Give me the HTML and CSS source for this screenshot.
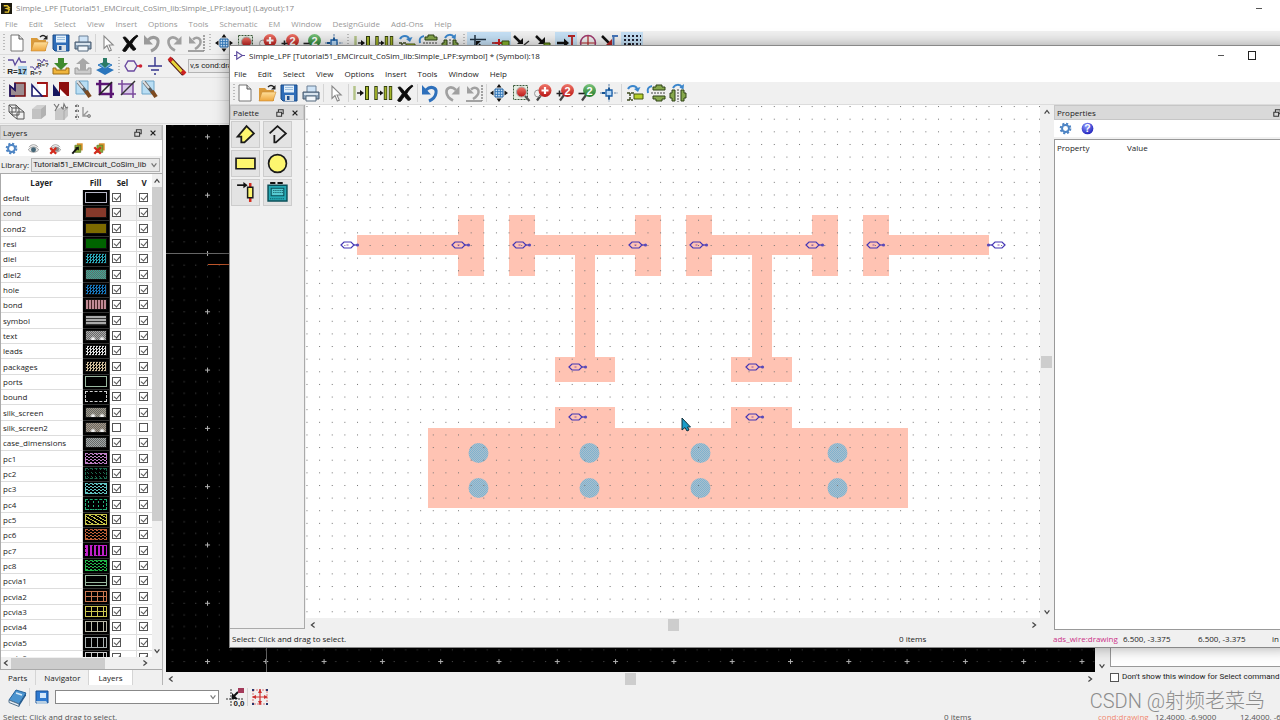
FILE: index.html
```html
<!DOCTYPE html>
<html lang="en">
<head>
<meta charset="utf-8">
<title>Simple_LPF (Symbol):18</title>
<link rel="stylesheet" href="styles.css">
</head>
<body>
<svg class="sprite" aria-hidden="true">
  <defs>
    <linearGradient id="g-red" x1="0" y1="0" x2="0" y2="1"><stop offset="0" stop-color="#f0776a"/><stop offset="1" stop-color="#b81414"/></linearGradient>
    <linearGradient id="g-green" x1="0" y1="0" x2="0" y2="1"><stop offset="0" stop-color="#7cc47c"/><stop offset="1" stop-color="#1d7a2a"/></linearGradient>
    <linearGradient id="g-folder" x1="0" y1="0" x2="0" y2="1"><stop offset="0" stop-color="#ffdf9a"/><stop offset="1" stop-color="#eda63c"/></linearGradient>
    <radialGradient id="g-help" cx=".4" cy=".3" r=".8"><stop offset="0" stop-color="#8f9cff"/><stop offset="1" stop-color="#1414b4"/></radialGradient>
    <pattern id="p-weave" width="2" height="2" patternUnits="userSpaceOnUse"><rect width="2" height="2" fill="#a9bfce"/><path d="M0 0h1v1H0zM1 1h1v1H1z" fill="#7fb2ce"/></pattern>
    <pattern id="p-grid" x="357" y="245" width="12.63" height="12.63" patternUnits="userSpaceOnUse"><rect width="1" height="1" fill="#707070"/></pattern>
    <pattern id="p-dark" x="207" y="253" width="58.3" height="58.3" patternUnits="userSpaceOnUse">
      <path fill="#555" d="M0 11.7h1v1H0zM0 23.3h1v1H0zM0 35h1v1H0zM0 46.6h1v1H0zM11.7 0h1v1h-1zM11.7 11.7h1v1h-1zM11.7 23.3h1v1h-1zM11.7 35h1v1h-1zM11.7 46.6h1v1h-1zM23.3 0h1v1h-1zM23.3 11.7h1v1h-1zM23.3 23.3h1v1h-1zM23.3 35h1v1h-1zM23.3 46.6h1v1h-1zM35 0h1v1h-1zM35 11.7h1v1h-1zM35 23.3h1v1h-1zM35 35h1v1h-1zM35 46.6h1v1h-1zM46.6 0h1v1h-1zM46.6 11.7h1v1h-1zM46.6 23.3h1v1h-1zM46.6 35h1v1h-1zM46.6 46.6h1v1h-1z"/>
    </pattern>
    <pattern id="p-cross" x="205" y="251" width="58.3" height="58.3" patternUnits="userSpaceOnUse"><path d="M0 2.5h5M2.5 0v5" stroke="#b5b5b5"/></pattern>
  </defs>

  <symbol id="i-new" viewBox="0 0 20 20"><path d="M4 2h8l4 4v12H4z" fill="#fff" stroke="#777"/><path d="M12 2v4h4" fill="#ddd" stroke="#555"/></symbol>
  <symbol id="i-open" viewBox="0 0 20 20"><path d="M2 5h6l2 2h7v11H2z" fill="#d99a3a"/><path d="M2 18L5 9h14l-3 9z" fill="url(#g-folder)" stroke="#c98b35" stroke-width=".6"/><path d="M11 4c2-2 4-2 6 0" fill="none" stroke="#222" stroke-width="1.4"/><path d="M18.500 2v4.500H14z" fill="#222"/></symbol>
  <symbol id="i-save" viewBox="0 0 20 20"><path d="M2 2h16v16H4l-2-2z" fill="#2f6db8" stroke="#184a86"/><path d="M5 2.500h10v7H5z" fill="#e3f0fb"/><path d="M6 4.500h8M6 6.500h8" stroke="#9fc1df"/><path d="M6 12h9v6H6z" fill="#d8dfe6"/><path d="M8 13h2.500v4H8z" fill="#1f4f8d"/></symbol>
  <symbol id="i-print" viewBox="0 0 20 20"><path d="M6 3h9v7H6z" fill="#cfe4f7" stroke="#6a7f95"/><path d="M2 9h16v7H2z" fill="#8ba3ba" stroke="#46596c"/><path d="M3 10h14v2H3z" fill="#d9e4ee"/><path d="M5 13h10v5H5z" fill="#f3f7fb" stroke="#54687c"/></symbol>
  <symbol id="i-pointer" viewBox="0 0 20 20"><path d="M6 3v12.500l3-3 2.300 5.500 2-.9-2.300-5.100h4.200z" fill="#fff" stroke="#888" stroke-width="1.100"/></symbol>
  <symbol id="i-delete" viewBox="0 0 20 20"><path d="M3 4.500c1.500-1 2.700-.7 3.700.8l3 3.500c2-3 4-4.800 7.300-6.800l1 1.200c-3 2.500-4.800 4.800-6.200 7.600l4.200 5.200c-1.500 1.800-3 1.800-4.200.3l-2.500-3-3.300 4.700c-1.200 1-3 .6-3.400-.8l4.700-6.400z" fill="#0b0b0b" stroke="#0b0b0b" stroke-width=".8"/></symbol>
  <symbol id="i-undo" viewBox="0 0 20 20"><path d="M6 7c5-5 11-2 10 3-.5 3.500-3.500 6.500-7 8" fill="none" stroke="#2e70bb" stroke-width="3"/><path d="M2 2v9.500h9z" fill="#2e70bb"/></symbol>
  <symbol id="i-undo-off" viewBox="0 0 20 20"><path d="M6 7c5-5 11-2 10 3-.5 3.500-3.500 6.500-7 8" fill="none" stroke="#9a9a9a" stroke-width="3"/><path d="M2 2v9.500h9z" fill="#9a9a9a"/></symbol>
  <symbol id="i-redo" viewBox="0 0 20 20"><path d="M14 7c-5-5-10-2-9.500 2.500.4 3.500 3.500 6.500 6.500 8" fill="none" stroke="#a0a0a0" stroke-width="2.600"/><path d="M17.500 3v8.500H9.500z" fill="#a0a0a0"/></symbol>
  <symbol id="i-undo-list" viewBox="0 0 20 20"><path d="M7 6.500c4-3.500 8-1 7.500 3-.4 3-3 5-5.500 6.500" fill="none" stroke="#a0a0a0" stroke-width="2.400"/><path d="M3 3v7.500h7z" fill="#a0a0a0"/><path d="M2 18h16" stroke="#888" stroke-width="1.500"/><path d="M18 2v16" stroke="#888" stroke-width="1.500" stroke-dasharray="2 1"/></symbol>
  <symbol id="i-view-all" viewBox="0 0 20 20"><path d="M6 6h8v8H6z" fill="#cfe6fa" stroke="#14589c"/><path d="M8.700 6v8M11.300 6v8M6 8.700h8M6 11.300h8" stroke="#2f76b8"/><path d="M10 1l2.500 3.500h-5zM10 19l2.500-3.500h-5zM1 10l3.500-2.500v5zM19 10l-3.500-2.500v5z" fill="#111"/></symbol>
  <symbol id="i-zoom-area" viewBox="0 0 20 20"><path d="M2.500 2.500h14v14h-14z" fill="#e5eee2" stroke="#3c5a3c" stroke-dasharray="2 1"/><circle cx="10.500" cy="9" r="5" fill="url(#g-red)" stroke="#aaa"/><path d="M14 13l4.500 5" stroke="#555" stroke-width="2.200"/></symbol>
  <symbol id="i-zoom-in" viewBox="0 0 20 20"><path d="M8 12l-4 5.500" stroke="#444" stroke-width="2.200"/><circle cx="5" cy="10.500" r="3.500" fill="none" stroke="#999"/><circle cx="12" cy="7.500" r="6.500" fill="url(#g-red)"/><path d="M12 4v7M8.500 7.500h7" stroke="#fff" stroke-width="2.200"/></symbol>
  <symbol id="i-zoom-in2" viewBox="0 0 20 20"><path d="M9 12l-4 5.500" stroke="#444" stroke-width="2.200"/><circle cx="12.500" cy="7.500" r="6.500" fill="url(#g-red)"/><path d="M4.500 7.500v6M1.500 10.500h6" stroke="#222" stroke-width="1.600"/><text x="12.500" y="11.500" class="icon-digit">2</text></symbol>
  <symbol id="i-zoom-out2" viewBox="0 0 20 20"><path d="M9 12l-4 5.500" stroke="#444" stroke-width="2.200"/><circle cx="12.500" cy="7.500" r="6.500" fill="url(#g-green)"/><path d="M1.500 10.500h6" stroke="#222" stroke-width="1.600"/><text x="12.500" y="11.500" class="icon-digit">2</text></symbol>
  <symbol id="i-center" viewBox="0 0 20 20"><path d="M10 1v18M1 10h18" stroke="#5b7fa6" stroke-dasharray="2.500 1"/><path d="M7 7h6v6H7z" fill="#b9d9f5" stroke="#1a5fa8" stroke-width="1.300"/><path d="M10 4.500v3M10 12.500v4M3 10h3" stroke="#155393" stroke-width="1.800"/></symbol>
  <symbol id="i-copy-to" viewBox="0 0 20 20"><path d="M3.500 3v14" stroke="#b5c48a" stroke-width="2.500"/><path d="M16 3v14" stroke="#33400f" stroke-width="4"/><path d="M16 4v12" stroke="#a5b52a" stroke-width="2"/><path d="M6 10h4" stroke="#111" stroke-width="1.300"/><path d="M13 10L9 7v6z" fill="#111"/></symbol>
  <symbol id="i-copy-many" viewBox="0 0 20 20"><path d="M3 3v14M12.500 3v14M17.500 3v14" stroke="#33400f" stroke-width="3.400"/><path d="M3 4v12M12.500 4v12M17.500 4v12" stroke="#a5b52a" stroke-width="1.800"/><path d="M5 10h3" stroke="#111" stroke-width="1.300"/><path d="M10.500 10L7 7.500v5z" fill="#111"/></symbol>
  <symbol id="i-rotate" viewBox="0 0 20 20"><path d="M4 6c2-4 8-4 9 0" fill="none" stroke="#3b86cc" stroke-width="2"/><path d="M16.500 4l-2.500 5-4-3z" fill="#3b86cc"/><path d="M3 10h7M3 17h6M6 10v7" stroke="#3e4a20" stroke-width="1.500" stroke-dasharray="3 1"/><path d="M10 11h9v5h-9z" fill="#b6cf2c" stroke="#42540e"/></symbol>
  <symbol id="i-flip-v" viewBox="0 0 20 20"><path d="M2 10c-1-4 0-6 4-7" fill="none" stroke="#3b86cc" stroke-width="2"/><path d="M5 10h14" stroke="#444" stroke-dasharray="2 1"/><path d="M7 4h3V2h6v2h3v3H7zM7 13h12v3h-3v2h-6v-2H7z" fill="#86a84c" stroke="#2f4316"/></symbol>
  <symbol id="i-flip-h" viewBox="0 0 20 20"><path d="M5 5c2-4 7-4 9-1" fill="none" stroke="#3b86cc" stroke-width="2"/><path d="M16 1l-.5 5.500-4-2z" fill="#3b86cc"/><path d="M10 6v13" stroke="#444" stroke-dasharray="2 1"/><path d="M7 7v11H4v-3H2v-5h2V7zM13 7v11h3v-3h2v-5h-2V7z" fill="#86a84c" stroke="#2f4316"/></symbol>
  <symbol id="i-snap-corner" viewBox="0 0 20 20"><path d="M2 6.500h16M7 2v16" stroke="#234" stroke-width="1.500"/><path d="M15 15l-4-4" stroke="#111" stroke-width="1.500"/><path d="M8 8h5l-5 5z" fill="#111"/></symbol>
  <symbol id="i-snap-pin" viewBox="0 0 20 20"><path d="M2 10h6" stroke="#911" stroke-width="1.500"/><path d="M9 6v8M5 10h8" stroke="#c22" stroke-width="2"/><path d="M12 8h7v5h-7z" fill="#86b32f" stroke="#375010"/></symbol>
  <symbol id="i-snap-vertex" viewBox="0 0 20 20"><path d="M2 3l7 7" stroke="#111" stroke-width="2.500"/><path d="M11 5v6H5z" fill="#111"/><path d="M12 12l6 4M12 12l5-4M12 12v6" stroke="#333" stroke-width="1.500"/></symbol>
  <symbol id="i-snap-edge" viewBox="0 0 20 20"><path d="M2 3l7 7" stroke="#111" stroke-width="2.500"/><path d="M11 4v7H4z" fill="#111"/><path d="M10 10h6v6h-6z" fill="#7aa52a" stroke="#36500d"/></symbol>
  <symbol id="i-snap-end" viewBox="0 0 20 20"><path d="M1 10h9" stroke="#111" stroke-width="2.500"/><path d="M13 10L8 5.500v9z" fill="#111"/><path d="M12 3h7M16 3v14" stroke="#b32424" stroke-width="1.800"/></symbol>
  <symbol id="i-snap-center" viewBox="0 0 20 20"><circle cx="10" cy="10" r="7.500" fill="none" stroke="#a03a6e" stroke-width="1.500"/><path d="M10 3v14M3 10h14" stroke="#b32424" stroke-width="1.200"/></symbol>
  <symbol id="i-snap-mid" viewBox="0 0 20 20"><path d="M2 3l7 7" stroke="#111" stroke-width="2.500"/><path d="M12 6v6H6z" fill="#b32424"/><path d="M12 3h6M13.500 3v15" stroke="#4574b8" stroke-width="2"/></symbol>
  <symbol id="i-snap-grid" viewBox="0 0 20 20"><path d="M2 3h17M2 7h17M2 11h17M2 15h17" stroke="#223" stroke-width="2" stroke-dasharray="2 2"/><path d="M5 12l4-2v5z" fill="#111"/></symbol>

  <symbol id="i-var" viewBox="0 0 20 20"><path d="M1 4h5l2 5 4-7 2 4h5" fill="none" stroke="#5b4a9c" stroke-width="1.300"/><path d="M11 10h9v9h-9z" fill="#a8cfe8"/><text x="10" y="18" class="icon-label">R=17</text></symbol>
  <symbol id="i-vars" viewBox="0 0 20 20"><path d="M8 4h3l2 3 2-4 1 2h3M1 11h3l2 3 2-4 1 2h2" fill="none" stroke="#5b4a9c"/><text x="14" y="11" class="icon-label small">R=?</text><text x="7" y="19" class="icon-label small">R=?</text></symbol>
  <symbol id="i-push" viewBox="0 0 20 20"><path d="M2 12v6h16v-6h-3v2H5v-2z" fill="#f0b53c" stroke="#9a6a14"/><path d="M7 2h6v5h4l-7 7-7-7h4z" fill="#3f8a2e"/></symbol>
  <symbol id="i-pop" viewBox="0 0 20 20"><path d="M2 12v6h16v-6h-3v2H5v-2z" fill="#ccc" stroke="#999"/><path d="M7 14h6V8h4l-7-6-7 6h4z" fill="#a8a8a8"/></symbol>
  <symbol id="i-stack" viewBox="0 0 20 20"><path d="M1 14l9-4 9 4-9 5z" fill="#2a76bd"/><path d="M3 9l7-3 7 3-7 4z" fill="#7bb7e6" stroke="#2a76bd"/><path d="M8 2h4v5h3l-5 5-5-5h3z" fill="#2b7b66"/></symbol>
  <symbol id="i-pin" viewBox="0 0 20 20"><path d="M2 10l3-5h6l3 5-3 5H5z" fill="none" stroke="#6a4aa0" stroke-width="1.400"/><path d="M14 10h4" stroke="#c23" stroke-width="1.500"/><circle cx="17.500" cy="10" r="1.800" fill="#c23"/></symbol>
  <symbol id="i-ground" viewBox="0 0 20 20"><path d="M10 1v9M3 10h14M6 14h8M9 18h2" stroke="#35358c" stroke-width="1.400"/></symbol>
  <symbol id="i-trace" viewBox="0 0 20 20"><path d="M3 3l14 15" stroke="#4a1212" stroke-width="5"/><path d="M4 4l12 13" stroke="#e8d53a" stroke-width="3"/><path d="M2 2l3 3M15 15l3 3" stroke="#c22" stroke-width="4"/></symbol>

  <symbol id="i-union" viewBox="0 0 20 20"><path d="M3 7l5 4V4h10v13H3z" fill="#9b8c90" stroke="#7c1111" stroke-width="1.600"/><path d="M8 4v7L3 7v10h5" fill="none" stroke="#1b1b6e" stroke-width="1.600"/></symbol>
  <symbol id="i-intersect" viewBox="0 0 20 20"><path d="M8 4h10v13h-6" fill="#fff" stroke="#a01414" stroke-width="1.800"/><path d="M3 6v11h10z" fill="#fff" stroke="#1b1b6e" stroke-width="1.600"/></symbol>
  <symbol id="i-subtract" viewBox="0 0 20 20"><path d="M8 3h10v14H8z" fill="#8d0f0f"/><path d="M2 5v12h9z" fill="#15155e"/><path d="M9 10v7h7z" fill="#fff"/></symbol>
  <symbol id="i-tool-knife" viewBox="0 0 20 20"><path d="M3 2h12v13H3z" fill="#b9def4" stroke="#6ea6c9"/><path d="M5 3l9 11" stroke="#555" stroke-width="3.500"/><path d="M4 2l6 7" stroke="#ddd" stroke-width="2"/><path d="M13 12l4 6" stroke="#7d4a1f" stroke-width="4"/></symbol>
  <symbol id="i-crop" viewBox="0 0 20 20"><path d="M1 5h15v14M5 1v14h14" fill="none" stroke="#5a1673" stroke-width="2.600"/><path d="M4 16L17 3" stroke="#222" stroke-width="1.600"/></symbol>
  <symbol id="i-crop-light" viewBox="0 0 20 20"><path d="M5 5h11v10H5z" fill="#d9c8ea"/><path d="M1 5h15v14M5 1v14h14" fill="none" stroke="#7a4a9c" stroke-width="1.500"/><path d="M4 16L18 2" stroke="#333" stroke-width="1.500"/></symbol>
  <symbol id="i-cubes" viewBox="0 0 20 20"><path d="M2 3h7v7H2zM5 6h7v7H5zM10 10h7v7h-7zM2 3l3 3M9 3l3 3M12 6l5 4M5 13l5 4M2 10l3 3" fill="none" stroke="#555"/></symbol>
  <symbol id="i-solid" viewBox="0 0 20 20"><path d="M3 7l5-4h9v10l-5 4H3z" fill="#d0d0d0"/><path d="M3 7h9v10H3z" fill="#c2c2c2"/><path d="M12 7l5-4v10l-5 4z" fill="#b2b2b2"/></symbol>
  <symbol id="i-solid-axis" viewBox="0 0 20 20"><path d="M4 9l4-3h9v8l-4 4H4z" fill="#c8c8c8"/><path d="M13 9v9M13 9l4-3" fill="none" stroke="#aaa"/><path d="M3 2l3 4M8 2L4 9M10 5l2 2 1-5 2 4 2-1" fill="none" stroke="#777" stroke-width="1.200"/></symbol>
  <symbol id="i-tree" viewBox="0 0 20 20"><path d="M4 2v16" stroke="#aaa" stroke-width="1.400" stroke-dasharray="3 2"/><path d="M10 5v9h7M10 14l5-5" fill="none" stroke="#999" stroke-width="1.400"/><path d="M2 4h4M2 9h4M2 15h4" stroke="#777" stroke-width="2" stroke-dasharray="2 1"/><circle cx="16" cy="14" r="1.500" fill="none" stroke="#888"/></symbol>

  <symbol id="i-gear" viewBox="0 0 20 20"><circle cx="10" cy="10" r="7.500" fill="none" stroke="#4d84c4" stroke-width="3" stroke-dasharray="3.200 2.690"/><circle cx="10" cy="10" r="5.300" fill="none" stroke="#4d84c4" stroke-width="3"/></symbol>
  <symbol id="i-help" viewBox="0 0 20 20"><circle cx="10" cy="10" r="9" fill="url(#g-help)"/><text x="10" y="15.500" class="icon-help">?</text></symbol>
  <symbol id="i-eye" viewBox="0 0 20 20"><path d="M2 12c4-6 12-6 16 0-4 5-12 5-16 0z" fill="#e4e4e4" stroke="#888" stroke-width="1.200"/><circle cx="10" cy="12" r="3.800" fill="#467"/><path d="M3 8c4-5 10-5 14 0" fill="none" stroke="#999" stroke-width="1.500"/></symbol>
  <symbol id="i-eye-off" viewBox="0 0 20 20"><path d="M2 12c4-6 12-6 16 0-4 5-12 5-16 0z" fill="#e4e4e4" stroke="#888" stroke-width="1.200"/><circle cx="12" cy="11" r="3.500" fill="#888"/><path d="M3 8c4-5 10-5 14 0" fill="none" stroke="#999" stroke-width="1.500"/><path d="M2 9l9 9M11 9l-9 9" stroke="#d42a1c" stroke-width="3.500"/></symbol>
  <symbol id="i-layers" viewBox="0 0 20 20"><path d="M9 2h9v11H9z" fill="#d9922c"/><path d="M6 5h9v11H6z" fill="#89a83a" stroke="#5b7420"/><path d="M2 18l8-9" stroke="#111" stroke-width="3"/><path d="M12 7v6L6 9z" fill="#111"/></symbol>
  <symbol id="i-layers-off" viewBox="0 0 20 20"><path d="M9 2h9v11H9z" fill="#d9922c"/><path d="M6 5h9v11H6z" fill="#89a83a" stroke="#5b7420"/><path d="M2 8l10 10M12 8L2 18" stroke="#d42a1c" stroke-width="3.500"/></symbol>
  <symbol id="i-book" viewBox="0 0 20 20"><path d="M2 13L9 3l10 3-7 11z" fill="#4b94cf" stroke="#26659e"/><path d="M2 13l10 4v2.500L2 15.500z" fill="#e7eef5" stroke="#56758f"/><path d="M12 17l7-11v2.500L12 19.500z" fill="#23598c"/><path d="M9 6l6 2" stroke="#d5e9f8" stroke-width="1.500"/></symbol>
  <symbol id="i-manual" viewBox="0 0 20 20"><path d="M4 4h12v12H4z" fill="#2f7ad0" stroke="#174f93"/><path d="M8 6h6v5H8z" fill="#d3e8fb"/><path d="M4 14h10l2 3H5z" fill="#b9cfe2"/></symbol>
  <symbol id="i-origin" viewBox="0 0 20 20"><path d="M6 2v17M1 12h18" stroke="#333" stroke-dasharray="2 1"/><path d="M7 11l6-6" stroke="#111" stroke-width="2"/><path d="M7 6v6h6z" fill="#111"/><path d="M13 1h6v5h-6z" fill="#a33a5a"/><text x="14" y="19" class="icon-label">0,0</text></symbol>
  <symbol id="i-extents" viewBox="0 0 20 20"><path d="M3 3h14v14H3z" fill="none" stroke="#d77" stroke-dasharray="2 1"/><path d="M10 2v16M3 10h14" stroke="#cf3030" stroke-width="1.200"/><path d="M10 2l2 4H8zM10 18l2-4H8zM2 10l4-2v4zM18 10l-4-2v4z" fill="#cf3030"/><path d="M2 2h2v2H2zM16 2h2v2h-2zM2 16h2v2H2zM16 16h2v2h-2z" fill="#26366e"/></symbol>

  <symbol id="i-polygon" viewBox="0 0 20 20"><path d="M11 2l7 7-9 8.500H6V12H2.500z" fill="#fdf66f" stroke="#1a1a1a" stroke-width="1.700"/></symbol>
  <symbol id="i-polyline" viewBox="0 0 20 20"><path d="M2.500 9L10 2l8 7-9.500 8.500H7v-7" fill="none" stroke="#1a1a1a" stroke-width="1.700"/></symbol>
  <symbol id="i-rect" viewBox="0 0 20 20"><path d="M1 5h18v10H1z" fill="#fdf66f" stroke="#1a1a1a" stroke-width="1.600"/></symbol>
  <symbol id="i-circle" viewBox="0 0 20 20"><circle cx="10" cy="10" r="8.500" fill="#fdf66f" stroke="#1a1a1a" stroke-width="1.600"/></symbol>
  <symbol id="i-place-pin" viewBox="0 0 20 20"><path d="M2 3h7" stroke="#111" stroke-width="1.600"/><path d="M12 3L8 0v6z" fill="#111"/><path d="M14.500 1v18" stroke="#d42a1c" stroke-width="2.400"/><path d="M12 5h5v10h-5z" fill="#fdf66f" stroke="#1a1a1a" stroke-width="1.400"/></symbol>
  <symbol id="i-generate" viewBox="0 0 20 20"><path d="M1 3h18v15H1z" fill="#25a9b4" stroke="#0a4f58" stroke-width="1.400"/><path d="M3 1h5M10 1h5" stroke="#111" stroke-width="2"/><path d="M4 6h12v7H4z" fill="#57cbd2" stroke="#0a4f58"/><path d="M6 8h9M6 10h9M3 16h14" stroke="#0a4f58" stroke-dasharray="1 1"/></symbol>
  <symbol id="i-float" viewBox="0 0 10 10"><path d="M3 4V1h6v5H7M1 4h6v5H1z" fill="none" stroke="#333" stroke-width="1.300"/></symbol>
  <symbol id="i-close" viewBox="0 0 10 10"><path d="M2 2l6 6M8 2L2 8" stroke="#222" stroke-width="1.600"/></symbol>
  <symbol id="i-up" viewBox="0 0 10 10"><path d="M2 7l3-4 3 4" fill="none" stroke="#444" stroke-width="1.500"/></symbol>
  <symbol id="i-down" viewBox="0 0 10 10"><path d="M2 3l3 4 3-4" fill="none" stroke="#444" stroke-width="1.500"/></symbol>
  <symbol id="i-left" viewBox="0 0 10 10"><path d="M7 2L3 5l4 3" fill="none" stroke="#444" stroke-width="1.500"/></symbol>
  <symbol id="i-right" viewBox="0 0 10 10"><path d="M3 2l4 3-4 3" fill="none" stroke="#444" stroke-width="1.500"/></symbol>
  <symbol id="port" viewBox="-8 -5 20 10" overflow="visible"><path d="M-7 0l3-3h7l3 3-3 3h-7z" fill="none" stroke="#4436b4" stroke-width="1.200"/><path d="M6 0h4" stroke="#4436b4" stroke-width="1.200"/><circle cx="9.500" cy="0" r="1.600" fill="#5a4ab8"/><path d="M-1.500 0h2" stroke="#8a50b0"/></symbol>
</svg>

<main class="app">
  <header class="app-title">
    <svg class="app-logo" viewBox="0 0 12 12"><path d="M0 0h12v12H0z" fill="#1c1a10"/><path d="M3 3h4l2 2-3 1 3 1-1 3H4" fill="none" stroke="#e6c52d" stroke-width="1.500"/></svg>
    <h1>Simple_LPF [Tutorial51_EMCircuit_CoSim_lib:Simple_LPF:layout] (Layout):17</h1>
    <button class="minimise" aria-label="Minimise"></button>
  </header>
  <nav class="menu muted" aria-label="Layout menu">
    <button>File</button><button>Edit</button><button>Select</button><button>View</button><button>Insert</button><button>Options</button><button>Tools</button><button>Schematic</button><button>EM</button><button>Window</button><button>DesignGuide</button><button>Add-Ons</button><button>Help</button>
  </nav>
  <div class="toolbar first" data-tools="new open save print | pointer delete undo-off redo undo-list || view-all zoom-area zoom-in zoom-in2 zoom-out2 center || copy-to copy-many rotate flip-v flip-h || snap-corner* snap-pin* snap-vertex snap-edge snap-end* snap-center snap-mid snap-grid*"></div>
  <div class="toolbar">
    <div class="tools" data-tools="var vars push pop stack || pin ground trace"></div>
    <label class="combo layer-combo"><select aria-label="Entry layer"><option>v,s cond:drawing</option></select></label>
  </div>
  <div class="toolbar" data-tools="union intersect subtract tool-knife crop crop-light tool-knife"></div>
  <div class="toolbar" data-tools="cubes solid solid-axis tree"></div>

  <div class="workspace">
    <aside class="layers">
      <div class="dock-head"><h2>Layers</h2><button aria-label="Float"><svg><use href="#i-float"/></svg></button><button aria-label="Close"><svg><use href="#i-close"/></svg></button></div>
      <div class="dock-tools" data-tools="gear eye eye-off layers layers-off"></div>
      <div class="library"><label for="library">Library:</label><span class="combo"><select id="library"><option>Tutorial51_EMCircuit_CoSim_lib</option></select><svg><use href="#i-down"/></svg></span></div>
      <div class="layer-view">
        <div class="layer-scroll">
          <table class="layer-table">
            <colgroup><col class="c-name"><col class="c-fill"><col class="c-sel"><col class="c-vis"></colgroup>
            <thead><tr><th>Layer</th><th>Fill</th><th>Sel</th><th>V</th></tr></thead>
            <tbody id="layer-rows"></tbody>
          </table>
        </div>
        <div class="vbar light"><button aria-label="Scroll up"><svg><use href="#i-up"/></svg></button><span class="thumb tall"></span><span class="rest"></span><button aria-label="Scroll down"><svg><use href="#i-down"/></svg></button></div>
      </div>
      <div class="hbar layer-hbar"><button aria-label="Scroll left"><svg><use href="#i-left"/></svg></button><span class="thumb wide"></span><span class="rest"></span><button aria-label="Scroll right"><svg><use href="#i-right"/></svg></button></div>
      <div class="tabs" role="tablist"><button role="tab">Parts</button><button role="tab">Navigator</button><button role="tab" class="active" aria-selected="true">Layers</button></div>
    </aside>

    <section class="layout-view" aria-label="Layout canvas">
      <div class="view-row">
        <svg class="layout-canvas"><g transform="translate(-166 -125)">
          <rect x="166" y="125" width="3000" height="2000" fill="#000"/>
          <rect x="166" y="125" width="3000" height="2000" fill="url(#p-dark)"/>
          <rect x="166" y="125" width="3000" height="2000" fill="url(#p-cross)"/>
          <path d="M166 253.500h3000M266.500 125v2000" stroke="#666"/><path d="M208 264.500h60" stroke="#c0562a"/>
        </g></svg>
        <div class="vbar"><span class="rest"></span><button aria-label="Scroll down"><svg><use href="#i-down"/></svg></button></div>
      </div>
      <div class="hbar layout-hbar"><button aria-label="Scroll left"><svg><use href="#i-left"/></svg></button><span class="rest"></span><span class="thumb"></span><span class="rest"></span><button aria-label="Scroll right"><svg><use href="#i-right"/></svg></button></div>
    </section>

    <aside class="info">
      <div class="info-box"></div>
      <label><input type="checkbox" class="tick">Don't show this window for Select command</label>
    </aside>
  </div>

  <div class="bottom-bar">
    <div class="tools" data-tools="book | manual"></div>
    <span class="combo search"><select aria-label="Component"><option></option></select><svg><use href="#i-down"/></svg></span>
    <div class="tools" data-tools="origin | extents"></div>
  </div>
  <footer class="status app-status"><span>Select: Click and drag to select.</span><span>0 items</span><span class="cond">cond:drawing</span><span>12.4000, -6.9000</span><span>12.4000, -6.9000</span></footer>
</main>

<section class="window" aria-label="Symbol window">
  <header class="win-title">
    <svg class="win-logo" viewBox="0 0 12 12"><path d="M3 2v8l6-4zM0 6h3M9 6h3" fill="none" stroke="#5d4c9e" stroke-width="1.300"/></svg>
    <h1>Simple_LPF [Tutorial51_EMCircuit_CoSim_lib:Simple_LPF:symbol] * (Symbol):18</h1>
    <button class="minimise" aria-label="Minimise"></button><button class="maximise" aria-label="Maximise"></button>
  </header>
  <nav class="menu" aria-label="Symbol menu">
    <button>File</button><button>Edit</button><button>Select</button><button>View</button><button>Options</button><button>Insert</button><button>Tools</button><button>Window</button><button>Help</button>
  </nav>
  <div class="toolbar" data-tools="new open save print | pointer | copy-to copy-many delete | undo redo undo-list | view-all zoom-area zoom-in zoom-in2 zoom-out2 center | rotate flip-v flip-h"></div>
  <div class="win-body">
    <aside class="palette">
      <div class="dock-head"><h2>Palette</h2><button aria-label="Float"><svg><use href="#i-float"/></svg></button><button aria-label="Close"><svg><use href="#i-close"/></svg></button></div>
      <div class="palette-grid" data-tools="polygon polyline rect circle place-pin generate"></div>
    </aside>
    <div class="symbol-view">
      <div class="view-row">
        <svg class="symbol-canvas" role="img" aria-label="Low pass filter symbol"><g transform="translate(-306 -105)">
          <g fill="#ffc3b3">
            <path d="M357 235h101v-20h26v61h-26v-21H357z"/>
            <path d="M509 215h26v20h100v-20h26v61h-26v-21h-40v102h20v25h-60v-25h20V255h-40v21h-26z"/>
            <path d="M686 215h26v20h100v-20h26v61h-26v-21h-40v102h20v25h-61v-25h21V255h-40v21h-26z"/>
            <path d="M863 215h26v20h100v20H889v21h-26z"/>
            <path d="M428 428h127v-21h60v21h116v-21h61v21h116v80H428z"/>
          </g>
          <g fill="url(#p-weave)"><circle cx="478.500" cy="453" r="10"/><circle cx="478.500" cy="488" r="10"/><circle cx="589.500" cy="453" r="10"/><circle cx="589.500" cy="488" r="10"/><circle cx="700.500" cy="453" r="10"/><circle cx="700.500" cy="488" r="10"/><circle cx="837.500" cy="453" r="10"/><circle cx="837.500" cy="488" r="10"/></g>
          <rect x="306" y="105" width="3000" height="2000" fill="url(#p-grid)"/>
          <g>
            <use href="#port" x="340" y="240" width="20" height="10"/><use href="#port" x="451" y="240" width="20" height="10"/>
            <use href="#port" x="512" y="240" width="20" height="10"/><use href="#port" x="628" y="240" width="20" height="10"/>
            <use href="#port" x="689" y="240" width="20" height="10"/><use href="#port" x="805" y="240" width="20" height="10"/>
            <use href="#port" x="866" y="240" width="20" height="10"/><use href="#port" x="-1006" y="240" width="20" height="10" transform="scale(-1 1)"/>
            <use href="#port" x="568" y="362" width="20" height="10"/><use href="#port" x="745" y="362" width="20" height="10"/>
            <use href="#port" x="568" y="412" width="20" height="10"/><use href="#port" x="745" y="412" width="20" height="10"/>
          </g>
          <path d="M682 418v12l3-2.500 2 3.500 2-1-1.500-3h3z" fill="#1b9cc8" stroke="#12303c"/>
        </g></svg>
        <div class="vbar"><button aria-label="Scroll up"><svg><use href="#i-up"/></svg></button><span class="rest"></span><span class="thumb"></span><span class="rest"></span><button aria-label="Scroll down"><svg><use href="#i-down"/></svg></button></div>
      </div>
      <div class="hbar symbol-hbar"><button aria-label="Scroll left"><svg><use href="#i-left"/></svg></button><span class="rest"></span><span class="thumb"></span><span class="rest"></span><button aria-label="Scroll right"><svg><use href="#i-right"/></svg></button></div>
    </div>
    <aside class="properties">
      <div class="dock-head"><h2>Properties</h2><button aria-label="Float"><svg><use href="#i-float"/></svg></button></div>
      <div class="dock-tools" data-tools="gear help"></div>
      <div class="prop-box"><table><thead><tr><th>Property</th><th>Value</th></tr></thead></table></div>
    </aside>
  </div>
  <footer class="status win-status"><span>Select: Click and drag to select.</span><span>0 items</span><span class="wire">ads_wire:drawing</span><span>6.500, -3.375</span><span>6.500, -3.375</span><span>in</span></footer>
</section>

<div class="watermark">CSDN @射频老菜鸟</div>
<script src="app.js"></script>
</body>
</html>
```
FILE: styles.css
```css
* { box-sizing: border-box; }
body { margin: 0; height: 100vh; overflow: hidden; position: relative; background: #f0f0f0; color: #222; font: 8px/12px "Open Sans", "Noto Sans", sans-serif; }
h1, h2 { margin: 0; font: inherit; white-space: nowrap; }
button, select, input { font: inherit; color: inherit; margin: 0; padding: 0; }
button { border: 0; background: none; display: flex; align-items: center; justify-content: center; flex: none; }
.sprite { position: absolute; width: 0; height: 0; }
.icon-digit { font: bold 11px "Liberation Sans", sans-serif; fill: #fff; text-anchor: middle; }
.icon-label { font: bold 8px "Liberation Sans", sans-serif; fill: #222; text-anchor: middle; }
.icon-label.small { font-size: 6px; }
.icon-help { font: bold 16px "Liberation Sans", sans-serif; fill: #fff; text-anchor: middle; }

.app { display: flex; flex-direction: column; height: calc(100vh + 5px); }
.app > * { flex: none; }
.app-title { height: 16px; display: flex; align-items: center; gap: 4px; padding: 0 16px 0 1px; background: #fff; color: #888; }
.app-logo { width: 11px; height: 11px; flex: none; }
.app-title h1, .win-title h1 { flex: 1; }
.minimise { width: 10px; height: 10px; }
.minimise::before { content: ""; width: 6px; height: 1px; background: #555; }
.menu { display: flex; align-items: center; gap: 11px; height: 17px; padding: 0 6px; background: #fff; }
.menu.muted { height: 15px; padding: 0 5px; color: #999; }

.toolbar { display: flex; align-items: center; height: 23px; padding-left: 6px; border-bottom: 1px solid #dcdcdc; background: #f0f0f0; position: relative; }
.toolbar.first { height: 24px; }
.toolbar::before { content: ""; position: absolute; left: 3px; width: 2px; height: 18px; background: repeating-linear-gradient(#bbb 0 1px, transparent 1px 3px); }
.tools { display: flex; align-items: center; }
.tool { width: 22px; height: 22px; }
.tool svg { width: 20px; height: 20px; }
.tool.on { background: #c5e0f5; }
.sep { width: 1px; height: 18px; background: #d4d4d4; margin: 0 1px; flex: none; }
.sep.wide { width: 2px; background: repeating-linear-gradient(#bbb 0 1px, transparent 1px 3px); margin: 0 2px; }

.combo { position: relative; display: flex; }
.combo select { appearance: none; width: 100%; border: 1px solid #b4b4b4; border-radius: 0; background: #e8e8e8; padding: 0 1px; height: 14px; line-height: 12px; font-family: Roboto, sans-serif; }
.combo svg { position: absolute; right: 2px; top: 3px; width: 8px; height: 8px; opacity: .7; }
.layer-combo { width: 80px; }

.app > .workspace { flex: 1; min-height: 0; display: flex; padding-top: 1px; }
.layers { width: 163px; flex: none; display: flex; flex-direction: column; margin-right: 3px; border-right: 1px solid #b5b5b5; }
.dock-head { display: flex; align-items: center; gap: 7px; height: 15px; padding: 0 4px 0 2px; background: #d9d9d9; border: 1px solid #c6c6c6; flex: none; }
.dock-head h2 { flex: 1; }
.dock-head button, .dock-head svg { width: 8px; height: 8px; }
.dock-tools { display: flex; align-items: center; height: 16px; background: #fff; flex: none; }
.dock-tools .tool svg { width: 13px; height: 13px; }
.library { display: flex; align-items: center; gap: 2px; height: 17px; padding: 0 2px 0 1px; flex: none; }
.library .combo { flex: 1; }
.layer-view { flex: 1; min-height: 0; display: flex; border-top: 1px solid #aaa; border-left: 1px solid #aaa; background: #fff; }
.layer-scroll { flex: 1; min-width: 0; overflow: hidden; }
.layer-table { table-layout: fixed; width: 100%; border-collapse: collapse; }
.c-name { width: 81px; } .c-fill { width: 27px; } .c-sel { width: 27px; }
.layer-table th, .layer-table td { padding: 0; text-align: left; white-space: nowrap; overflow: hidden; line-height: 13px; }
.layer-table th { height: 16px; text-align: center; font-weight: 700; color: #222; }
.layer-table td { height: 15px; border-bottom: 1px solid #ddd; border-right: 1px solid #ddd; padding-left: 2px; }
.layer-table tr:nth-child(3n) td { height: 16px; }
.layer-table tr.current td { background: #f0f0f0; }
.layer-table td.fill-cell, .layer-table tr.current td.fill-cell { background: #000; padding: 0 2px; border-color: #333; }
.layer-table td:last-child { border-right: 0; }
.swatch { display: block; height: 11px; border: 1px solid currentColor; }
.swatch.solid { background: currentColor; border-color: #111; }
.swatch.check { border-color: #111; background: repeating-conic-gradient(currentColor 0 25%, #000 0 50%) 0 0 / 3px 3px; }
.swatch.dense { border-color: #111; background: repeating-conic-gradient(currentColor 0 25%, #666 0 50%) 0 0 / 2px 2px; }
.swatch.stipple { border-color: #111; background: radial-gradient(circle at 35% 90%, #eee 1px, transparent 3px), radial-gradient(circle at 80% 90%, #eee 1px, transparent 3px), repeating-conic-gradient(currentColor 0 25%, #666 0 50%) 0 0 / 2px 2px; }
.swatch.vlines { border-color: #111; background: repeating-linear-gradient(90deg, currentColor 0 2px, #422 2px 3px); }
.swatch.hlines { border-color: #111; background: repeating-linear-gradient(currentColor 0 2px, #333 2px 3px); }
.swatch.dashed { border-style: dashed; }
.swatch.mesh { border-style: dashed; background: repeating-conic-gradient(currentColor 0 20%, #000 0 50%) 0 0 / 4px 3px; }
.swatch.faint { border-style: dashed; background: repeating-conic-gradient(currentColor 0 12%, #000 0 50%) 0 0 / 4px 4px; }
.swatch.dots { border-style: dashed; background: radial-gradient(currentColor 1px, transparent 1px) 0 0 / 5px 4px; }
.swatch.diag { background: repeating-linear-gradient(30deg, currentColor 0 1px, #000 1px 3px); }
.swatch.bars { border-style: dashed; background: repeating-linear-gradient(90deg, currentColor 0 2px, #000 2px 4px); }
.swatch.base { background: linear-gradient(currentColor, currentColor) 0 6px / 100% 1px no-repeat; }
.swatch.cells { background: linear-gradient(currentColor, currentColor) 0 4px / 100% 1px no-repeat, repeating-linear-gradient(90deg, transparent 0 5px, currentColor 5px 6px); }
.swatch.cols { background: repeating-linear-gradient(90deg, transparent 0 5px, currentColor 5px 6px); }

.tick { appearance: none; width: 9px; height: 9px; border: 1px solid #555; background: #fff; display: block; position: relative; flex: none; }
.tick:checked::after { content: ""; position: absolute; left: 2px; top: 0; width: 3px; height: 5px; border: solid #555; border-width: 0 1px 1px 0; transform: rotate(40deg); }

.vbar { width: 13px; flex: none; display: flex; flex-direction: column; align-items: center; background: #f0f0f0; }
.vbar.light { width: 10px; }
.vbar button, .hbar button { width: 10px; height: 13px; }
.vbar svg, .hbar svg { width: 8px; height: 8px; }
.rest { flex: 1; }
.thumb { width: 11px; height: 12px; background: #cdcdcd; flex: none; }
.thumb.tall { width: 100%; height: 334px; }
.thumb.wide { width: 94px; height: 11px; }
.hbar { height: 13px; flex: none; display: flex; align-items: center; background: #f0f0f0; }
.layer-hbar { padding: 0 12px 0 0; border: solid #aaa; border-width: 0 0 1px 1px; }
.layout-hbar { padding-right: 13px; }
.symbol-hbar { padding: 0 14px 0 2px; }
.tabs { display: flex; height: 15px; flex: none; }
.tabs button { padding: 0 8px; border-right: 1px solid #d5d5d5; }
.tabs .active { background: #fff; padding: 0 9px; }

.layout-view { flex: 1; min-width: 0; display: flex; flex-direction: column; }
.view-row { flex: 1; min-height: 0; display: flex; }
.layout-canvas, .symbol-canvas { flex: 1; min-width: 0; width: 0; height: auto; }
.info { width: 170px; margin-left: 2px; flex: none; display: flex; flex-direction: column; overflow: hidden; }
.info-box { flex: 1; background: #fff; border: 1px solid #999; border-right: 0; }
.info label { display: flex; align-items: center; gap: 3px; height: 16px; white-space: nowrap; margin-top: 2px; font-family: Roboto, sans-serif; }
.bottom-bar { display: flex; align-items: center; height: 23px; padding-left: 6px; }
.bottom-bar .combo { width: 164px; margin: 0 5px 0 2px; }
.bottom-bar select { background: #fff; border-color: #888; }
.status { display: grid; align-items: center; height: 16px; white-space: nowrap; }
.status span { overflow: hidden; }
.app > .app-status { height: 17px; grid-template-columns: 1fr 154px 57px 85px 40px; padding-left: 3px; color: #555; }
.cond { color: #f08a70; }
.wire { color: #cc3388; }

.window { position: absolute; left: 229px; right: -12px; top: 45px; height: 603px; display: flex; flex-direction: column; background: #f0f0f0; border: 1px solid #888; box-shadow: 0 0 14px rgba(0, 0, 0, .35); }
.win-title { height: 19px; display: flex; align-items: center; gap: 4px; padding: 0 35px 0 4px; background: #fff; flex: none; }
.win-title .minimise { margin-right: 18px; }
.win-logo { width: 11px; height: 11px; flex: none; }
.maximise { width: 8px; height: 8px; }
.maximise::before { content: ""; width: 7px; height: 7px; border: 1px solid #222; }
.window .menu { padding: 0 4px; flex: none; }
.window .toolbar { padding-left: 4px; flex: none; }
.win-body { flex: 1; min-height: 0; display: flex; }
.palette { width: 75px; flex: none; display: flex; flex-direction: column; border-right: 1px solid #aaa; border-bottom: 1px solid #aaa; margin: 0 1px 2px 0; }
.palette-grid { display: grid; grid-template-columns: 29px 29px; grid-auto-rows: 27px; gap: 2px 3px; padding: 1px 1px 0; }
.palette-grid .tool { width: auto; height: auto; background: #e3e3e3; border: 1px solid #ccc; }
.palette-grid .tool svg { width: 21px; height: 21px; }
.symbol-view { flex: 1; min-width: 0; display: flex; flex-direction: column; }
.symbol-canvas { background: #fff; }
.properties { width: 237px; margin-left: 1px; flex: none; display: flex; flex-direction: column; }
.properties .dock-head { padding-right: 9px; }
.properties .dock-tools { height: 17px; margin-bottom: 2px; }
.prop-box { flex: 1; background: #fff; border: 1px solid #999; margin-bottom: 1px; }
.prop-box table { border-collapse: collapse; }
.prop-box th { width: 70px; padding: 2px; text-align: left; font-weight: 400; }
.win-status { grid-template-columns: 1fr 154px 70px 75px 74px 19px; padding-left: 2px; flex: none; }

.watermark { position: absolute; right: 15px; top: 689px; font: 300 20px/24px Roboto, "Noto Sans CJK SC", sans-serif; color: #8c8c8c; }
```
FILE: app.js
```js
const layers = [
  ["default", "outline", "#b8b8c8"], ["cond", "solid", "#85392a"], ["cond2", "solid", "#7d6a00"],
  ["resi", "solid", "#006400"], ["diel", "check", "#2aa5b5"], ["diel2", "dense", "#35b09a"],
  ["hole", "check", "#1673b8"], ["bond", "vlines", "#c08a94"], ["symbol", "hlines", "#aaaaaa"],
  ["text", "stipple", "#aaaaaa"], ["leads", "check", "#dddddd"], ["packages", "check", "#cdbb98"],
  ["ports", "outline", "#9ab8a0"], ["bound", "dashed", "#d0d0d0"], ["silk_screen", "stipple", "#a09a88"],
  ["silk_screen2", "stipple", "#a89884"], ["case_dimensions", "dense", "#a0a8a8"], ["pc1", "mesh", "#c080c8"],
  ["pc2", "faint", "#1d6b50"], ["pc3", "mesh", "#62c4c4"], ["pc4", "dots", "#25b07a"],
  ["pc5", "diag", "#c8c44a"], ["pc6", "mesh", "#c06038"], ["pc7", "bars", "#c020c8"],
  ["pc8", "mesh", "#20b848"], ["pcvia1", "base", "#9ab8a0"], ["pcvia2", "cells", "#c87850"],
  ["pcvia3", "cells", "#cfc850"], ["pcvia4", "cols", "#b8b8a8"], ["pcvia5", "cols", "#a8b0b0"],
  ["pcvia6", "cols", "#c8c8c8"]
];
const hidden = new Set(["silk_screen2"]);

document.getElementById("layer-rows").innerHTML = layers.map(([name, fill, color]) => {
  const checked = hidden.has(name) ? "" : " checked";
  return `<tr${name === "cond" ? ' class="current"' : ""}><td>${name}</td>
    <td class="fill-cell"><span class="swatch ${fill}" style="color:${color}"></span></td>
    <td><input type="checkbox" class="tick" aria-label="Select ${name}"${checked}></td>
    <td><input type="checkbox" class="tick" aria-label="Show ${name}"${checked}></td></tr>`;
}).join("");

document.querySelectorAll("[data-tools]").forEach((bar) => {
  bar.innerHTML = bar.dataset.tools.split(" ").map((item) => {
    if (item === "|") return '<span class="sep"></span>';
    if (item === "||") return '<span class="sep wide"></span>';
    const name = item.replace("*", "");
    return `<button class="tool${item.endsWith("*") ? " on" : ""}" aria-label="${name}"><svg><use href="#i-${name}"/></svg></button>`;
  }).join("");
});
```
